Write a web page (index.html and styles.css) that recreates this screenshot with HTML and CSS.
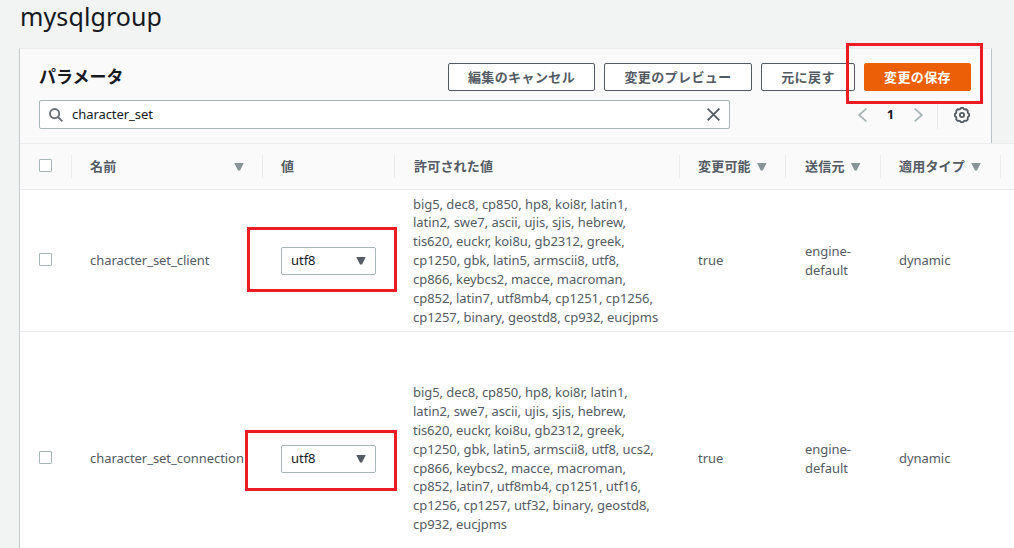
FILE: index.html
```html
<!DOCTYPE html>
<html lang="ja">
<head>
<meta charset="utf-8">
<title>mysqlgroup</title>
<link rel="stylesheet" href="styles.css">
</head>
<body>
<main class="page">
  <h1 class="title"><span>mysqlgroup</span></h1>
  <section class="panel">
    <header class="panel-head">
      <div class="head-row">
        <h2 class="panel-title">パラメータ</h2>
        <div class="actions">
          <button class="btn cancel">編集のキャンセル</button>
          <button class="btn preview">変更のプレビュー</button>
          <button class="btn reset">元に戻す</button>
          <button class="btn primary">変更の保存</button>
        </div>
      </div>
      <div class="tools">
        <div class="search">
          <svg class="search-icon" viewBox="0 0 14 14"><circle cx="5.6" cy="5.6" r="4.6"/><path d="M9 9l4.3 4.3"/></svg>
          <span class="search-text">character_set</span>
          <svg class="clear" viewBox="0 0 12 12"><path d="M.6.6l10.8 10.8M11.4.6L.6 11.4"/></svg>
        </div>
        <div class="pager">
          <svg class="arrow" viewBox="0 0 9 14"><path d="M8.3.7L1.2 7l7.1 6.3"/></svg>
          <span class="page-no">1</span>
          <svg class="arrow" viewBox="0 0 9 14"><path d="M.7.7L7.8 7 .7 13.3"/></svg>
          <span class="settings">
            <svg class="gear" viewBox="0 0 16 16"><path d="M6.3 1.9L7 .9h2l.7 1 1.5.6 1.2-.2 1.4 1.4-.2 1.2.6 1.4 1 .7v2l-1 .7-.6 1.5.2 1.2-1.4 1.4-1.2-.2-1.5.6-.7 1H7l-.7-1-1.5-.6-1.2.2-1.4-1.4.2-1.2-.6-1.5-1-.7V7l1-.7.6-1.4-.2-1.2 1.4-1.4 1.2.2z"/><circle cx="8" cy="8" r="2.1"/></svg>
          </span>
        </div>
      </div>
    </header>
    <div class="table">
      <div class="row header">
        <div class="cell"><span class="check"></span></div>
        <div class="cell"><span>名前</span><i class="sort"></i></div>
        <div class="cell"><span>値</span></div>
        <div class="cell"><span>許可された値</span></div>
        <div class="cell"><span>変更可能</span><i class="sort"></i></div>
        <div class="cell"><span>送信元</span><i class="sort"></i></div>
        <div class="cell"><span>適用タイプ</span><i class="sort"></i></div>
        <div class="cell"></div>
      </div>
      <div class="row first">
        <div class="cell"><span class="check"></span></div>
        <div class="cell"><span>character_set_client</span></div>
        <div class="cell"><div class="select"><span>utf8</span><i class="caret"></i></div></div>
        <div class="cell"><p class="values">big5, dec8, cp850, hp8, koi8r, latin1,<br>latin2, swe7, ascii, ujis, sjis, hebrew,<br>tis620, euckr, koi8u, gb2312, greek,<br>cp1250, gbk, latin5, armscii8, utf8,<br>cp866, keybcs2, macce, macroman,<br>cp852, latin7, utf8mb4, cp1251, cp1256,<br>cp1257, binary, geostd8, cp932, eucjpms</p></div>
        <div class="cell"><span>true</span></div>
        <div class="cell"><span>engine-<br>default</span></div>
        <div class="cell"><span>dynamic</span></div>
        <div class="cell"></div>
      </div>
      <div class="row second">
        <div class="cell"><span class="check"></span></div>
        <div class="cell"><span>character_set_connection</span></div>
        <div class="cell"><div class="select"><span>utf8</span><i class="caret"></i></div></div>
        <div class="cell"><p class="values">big5, dec8, cp850, hp8, koi8r, latin1,<br>latin2, swe7, ascii, ujis, sjis, hebrew,<br>tis620, euckr, koi8u, gb2312, greek,<br>cp1250, gbk, latin5, armscii8, utf8, ucs2,<br>cp866, keybcs2, macce, macroman,<br>cp852, latin7, utf8mb4, cp1251, utf16,<br>cp1256, cp1257, utf32, binary, geostd8,<br>cp932, eucjpms</p></div>
        <div class="cell"><span>true</span></div>
        <div class="cell"><span>engine-<br>default</span></div>
        <div class="cell"><span>dynamic</span></div>
        <div class="cell"></div>
      </div>
    </div>
  </section>
  <div class="mark mark-save"></div>
  <div class="mark mark-client"></div>
  <div class="mark mark-connection"></div>
</main>
</body>
</html>
```
FILE: styles.css
```css
* { box-sizing: border-box; }
body {
  margin: 0;
  background: #f2f3f3;
  color: #545b64;
  font: 13px/18.85px "Noto Sans", "Noto Sans CJK JP", sans-serif;
}
.page { position: relative; width: 1014px; height: 548px; overflow: hidden; }
.title {
  margin: 0;
  height: 48px;
  padding-left: 20px;
  color: #16191f;
  font-size: 25px;
  font-weight: 400;
  letter-spacing: .1px;
  line-height: 32px;
}
.panel { margin-left: 19px; }
.panel-head {
  width: 973px;
  height: 95px;
  padding: 14px 19px 0 19px;
  background: #fafafa;
  border-top: 1px solid #eaeded;
  border-left: 1px solid #c5cacc;
  border-right: 1px solid #bcc3c6;
}
.head-row { display: flex; justify-content: space-between; height: 37px; }
.panel-title { margin: 0; color: #16191f; font-size: 17px; font-weight: 700; line-height: 27px; }
.actions { display: flex; gap: 9px; margin-right: 1px; }
.btn {
  height: 28px;
  padding: 0;
  border: 1px solid #545b64;
  border-radius: 2px;
  background: #fff;
  color: #545b64;
  font: 700 13px/24px "Noto Sans CJK JP", sans-serif;
  letter-spacing: .4px;
  white-space: nowrap;
}
.cancel { width: 147px; }
.preview { width: 148px; }
.reset { width: 94px; }
.primary { width: 107px; background: #ec5f07; border-color: #ec5f07; color: #fff; }
.tools { display: flex; justify-content: space-between; height: 29px; }
.search {
  display: flex;
  align-items: center;
  width: 691px;
  height: 29px;
  padding: 0 9px;
  border: 1px solid #aab7b8;
  border-radius: 2px;
  background: #fff;
  color: #16191f;
}
.search-text { flex: 1; letter-spacing: -.06px; }
svg { display: block; fill: none; }
.search-icon { width: 14px; height: 14px; margin-right: 9px; stroke: #687078; stroke-width: 1.9; }
.clear { width: 13px; height: 13px; stroke: #545b64; stroke-width: 1.7; }
.pager { display: flex; align-items: center; margin-right: 2px; }
.arrow { width: 9px; height: 14px; stroke: #aab7b8; stroke-width: 1.8; }
.page-no { width: 47px; text-align: center; color: #16191f; font-weight: 700; }
.settings {
  display: flex;
  align-items: center;
  justify-content: flex-end;
  width: 33px;
  height: 29px;
  margin-left: 14px;
  border-left: 1px solid #eaeded;
}
.gear { width: 16px; height: 16px; stroke: #545b64; stroke-width: 1.8; }
.table { width: 995px; border-left: 1px solid #c5cacc; background: #fff; }
.row {
  display: grid;
  grid-template-columns: 51px 191px 132px 285px 106px 95px 120px 14px;
  border-bottom: 1px solid #eaeded;
}
.cell { display: flex; align-items: center; padding-left: 19px; white-space: nowrap; min-width: 0; letter-spacing: -.05px; }
.row:not(.header) .cell:nth-child(6) { padding-left: 20px; }
.header {
  height: 47px;
  border-top: 1px solid #eaeded;
  background: #fafafa;
  font-family: "Noto Sans CJK JP", sans-serif;
  font-weight: 700;
}
.header .cell { height: 23px; margin-top: 11px; letter-spacing: .2px; }
.header .cell:nth-child(n+2) { padding-left: 18px; border-left: 1px solid #eaeded; }
.header .cell:nth-child(6) { padding-left: 19px; }
.header .cell:nth-child(4) { padding-left: 19px; }
.header .cell:nth-child(2) { justify-content: space-between; padding-right: 18px; }
.first { height: 142px; }
.second { height: 254px; }
.values { margin: 0; }
.check { width: 13px; height: 13px; margin-bottom: 2px; border: 1px solid #aab7b8; border-radius: 1px; background: #fff; }
.sort, .caret {
  width: 10px;
  height: 8px;
  background: #879596;
  clip-path: polygon(0 0, 100% 0, 60% 100%, 40% 100%);
}
.sort { margin-left: 6px; }
.caret { background: #545b64; }
.select {
  display: flex;
  align-items: center;
  justify-content: space-between;
  width: 95px;
  height: 28px;
  padding: 0 9px;
  border: 1px solid #aab7b8;
  border-radius: 2px;
  color: #16191f;
}
/* Highlight frames laid over the controls */
.mark { position: absolute; border: 3px solid #ed1c24; }
.mark-save { left: 846px; top: 43px; width: 137px; height: 61px; }
.mark-client { left: 247px; top: 227px; width: 150px; height: 65px; }
.mark-connection { left: 245px; top: 430px; width: 152px; height: 61px; }
```
